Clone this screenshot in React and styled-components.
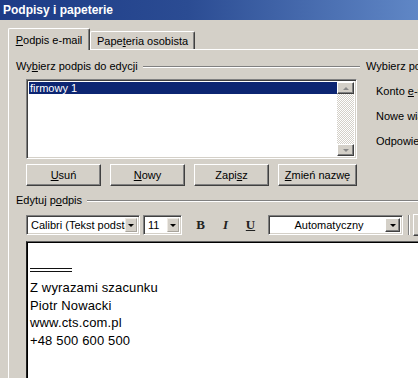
import React from "react";
import styled, { createGlobalStyle } from "styled-components";

const GlobalStyle = createGlobalStyle`
  html, body {
    margin: 0;
    padding: 0;
    overflow: hidden;
  }
  body {
    background: #d4d0c8;
    font-family: "Liberation Sans", Tahoma, Arial, sans-serif;
  }
`;

const Window = styled.div`
  width: 418px;
  height: 378px;
  overflow: hidden;
  background: #d4d0c8;
  display: flex;
  flex-direction: column;
  font-size: 11px;
  color: #000;
`;

const TitleBar = styled.div`
  flex: none;
  height: 20px;
  padding-left: 3px;
  background: linear-gradient(to right, #1d3b86, #2b4c93 45%, #6087c6);
  color: #fff;
  font-weight: bold;
  font-size: 12px;
  line-height: 20px;
  white-space: nowrap;
`;

const Body = styled.div`
  flex: 1;
  min-height: 0;
  display: flex;
  flex-direction: column;
  padding: 7px 0 0 8px;
`;

const TabRow = styled.div`
  flex: none;
  display: flex;
  align-items: flex-end;
  height: 22px;
`;

const Tab = styled.div`
  position: relative;
  z-index: ${(p) => (p.$active ? 2 : 1)};
  width: ${(p) => p.$w}px;
  height: ${(p) => (p.$active ? 22 : 18)}px;
  margin-bottom: ${(p) => (p.$active ? -1 : 0)}px;
  box-sizing: border-box;
  background: #d4d0c8;
  border-top: 1px solid #fff;
  border-left: 1px solid #fff;
  border-right: 1px solid #404040;
  border-radius: 2px 2px 0 0;
  box-shadow: inset -1px 0 #808080;
  display: flex;
  align-items: center;
  justify-content: center;
  padding-top: ${(p) => (p.$active ? 0 : 1)}px;
  white-space: nowrap;
`;

const Panel = styled.div`
  flex: 1;
  width: 470px;
  border-top: 1px solid #fff;
  border-left: 1px solid #fff;
  padding: 10px 0 0 7px;
  display: flex;
  flex-direction: column;
`;

const TopSection = styled.div`
  display: flex;
`;

const LeftCol = styled.div`
  width: 344px;
  flex: none;
  display: flex;
  flex-direction: column;
`;

const RightCol = styled.div`
  margin-left: 6px;
  display: flex;
  flex-direction: column;
  white-space: nowrap;
`;

const GroupHeader = styled.div`
  display: flex;
  align-items: center;
  height: 13px;
  line-height: 13px;
  white-space: nowrap;
`;

const Etched = styled.div`
  flex: 1;
  margin-left: 5px;
  height: 0;
  border-top: 1px solid #808080;
  border-bottom: 1px solid #fff;
`;

const OptionLabel = styled.div`
  margin-left: 10px;
  height: 13px;
  line-height: 13px;
  margin-top: ${(p) => p.$top}px;
`;

const ListBox = styled.div`
  margin: 6px 0 0 10px;
  width: 331px;
  height: 80px;
  box-sizing: border-box;
  border: 1px solid;
  border-color: #808080 #fff #fff #808080;
  box-shadow: inset 1px 1px #404040, inset -1px -1px #d4d0c8;
  background: #fff;
  display: flex;
  padding: 2px;
`;

const Items = styled.div`
  flex: 1;
`;

const Item = styled.div`
  height: 12px;
  line-height: 12px;
  padding-left: 1px;
  background: ${(p) => (p.$selected ? "#0c2572" : "transparent")};
  color: ${(p) => (p.$selected ? "#fff" : "#000")};
`;

const ScrollBar = styled.div`
  width: 17px;
  display: flex;
  flex-direction: column;
  justify-content: space-between;
  background: repeating-conic-gradient(#fff 0 25%, #d4d0c8 0 50%) 0 0 / 2px 2px;
`;

const ScrollButton = styled.div`
  height: 12px;
  box-sizing: border-box;
  background: #d4d0c8;
  border: 1px solid;
  border-color: #fff #404040 #404040 #fff;
  box-shadow: inset -1px -1px #808080;
  display: flex;
  align-items: center;
  justify-content: center;
`;

const Arrow = styled.div`
  width: 0;
  height: 0;
  border-left: 3px solid transparent;
  border-right: 3px solid transparent;
  ${(p) =>
    p.$up
      ? `border-bottom: 3px solid ${p.$color};`
      : `border-top: 3px solid ${p.$color};`}
`;

const ButtonRow = styled.div`
  display: flex;
  gap: 9px;
  margin: 5px 0 0 10px;
`;

const Button = styled.div`
  width: ${(p) => p.$w}px;
  height: 22px;
  box-sizing: border-box;
  background: #d4d0c8;
  border: 1px solid;
  border-color: #fff #404040 #404040 #fff;
  box-shadow: inset -1px -1px #808080;
  display: flex;
  align-items: center;
  justify-content: center;
  white-space: nowrap;
`;

const EditHeader = styled(GroupHeader)`
  margin-top: 8px;
`;

const Toolbar = styled.div`
  display: flex;
  align-items: center;
  height: 20px;
  margin: 8px 0 0 10px;
`;

const Combo = styled.div`
  width: ${(p) => p.$w}px;
  margin-right: ${(p) => p.$mr || 0}px;
  margin-left: ${(p) => p.$ml || 0}px;
  height: 20px;
  box-sizing: border-box;
  border: 1px solid;
  border-color: #808080 #fff #fff #808080;
  box-shadow: inset 1px 1px #404040, inset -1px -1px #d4d0c8;
  background: #fff;
  display: flex;
  align-items: center;
  padding: 2px;
`;

const ComboText = styled.div`
  flex: 1;
  min-width: 0;
  overflow: hidden;
  white-space: nowrap;
  padding-left: 2px;
  text-align: ${(p) => (p.$center ? "center" : "left")};
`;

const DropButton = styled.div`
  width: ${(p) => (p.$raised ? 15 : 12)}px;
  flex: none;
  align-self: stretch;
  box-sizing: border-box;
  background: #d4d0c8;
  ${(p) =>
    p.$raised
      ? `border: 1px solid; border-color: #fff #404040 #404040 #fff; box-shadow: inset -1px -1px #808080;`
      : `border: 1px solid; border-color: #eeeae4 #a8a49c #a8a49c #eeeae4;`}
  display: flex;
  align-items: center;
  justify-content: center;
`;

const FormatButton = styled.div`
  width: 25px;
  height: 20px;
  display: flex;
  align-items: center;
  justify-content: center;
  font-family: "Liberation Serif", "Times New Roman", serif;
  font-weight: bold;
  font-size: 13px;
  font-style: ${(p) => (p.$italic ? "italic" : "normal")};
  text-decoration: ${(p) => (p.$underline ? "underline" : "none")};
  color: #222;
`;

const Separator = styled.div`
  width: 0;
  height: 20px;
  margin: 0 3px 0 5px;
  border-left: 1px solid #808080;
  border-right: 1px solid #fff;
`;

const Editor = styled.div`
  flex: 1;
  margin: 6px 0 0 10px;
  background: #fff;
  border-top: 1px solid #606060;
  border-left: 1px solid #202020;
  box-shadow: inset 1px 1px #000;
  padding: 26px 0 0 3px;
  font-family: "Liberation Sans", Calibri, Arial, sans-serif;
  font-size: 13px;
  letter-spacing: 0.15px;
  line-height: 17.5px;
  color: #000;
`;

const DoubleRule = styled.div`
  width: 42px;
  height: 2px;
  border-top: 1px solid #111;
  border-bottom: 1px solid #111;
  margin-bottom: 7px;
`;

const U = styled.span`
  text-decoration: underline;
`;

export default function App() {
  return (
    <>
      <GlobalStyle />
      <Window>
        <TitleBar>Podpisy i papeterie</TitleBar>
        <Body>
          <TabRow>
            <Tab $active $w={82}>
              <span>
                <U>P</U>odpis e-mail
              </span>
            </Tab>
            <Tab $w={105}>
              <span>
                Pape<U>t</U>eria osobista
              </span>
            </Tab>
          </TabRow>
          <Panel>
            <TopSection>
              <LeftCol>
                <GroupHeader>
                  <span>
                    Wy<U>b</U>ierz podpis do edycji
                  </span>
                  <Etched />
                </GroupHeader>
                <ListBox>
                  <Items>
                    <Item $selected>firmowy 1</Item>
                  </Items>
                  <ScrollBar>
                    <ScrollButton>
                      <Arrow $up $color="#8a8a8a" />
                    </ScrollButton>
                    <ScrollButton>
                      <Arrow $color="#8a8a8a" />
                    </ScrollButton>
                  </ScrollBar>
                </ListBox>
                <ButtonRow>
                  <Button $w={75}>
                    <span>
                      <U>U</U>suń
                    </span>
                  </Button>
                  <Button $w={75}>
                    <span>
                      <U>N</U>owy
                    </span>
                  </Button>
                  <Button $w={75}>
                    <span>
                      Zapi<U>s</U>z
                    </span>
                  </Button>
                  <Button $w={79}>
                    <span>
                      <U>Z</U>mień nazwę
                    </span>
                  </Button>
                </ButtonRow>
              </LeftCol>
              <RightCol>
                <GroupHeader>Wybierz podpis domyślny</GroupHeader>
                <OptionLabel $top={12}>
                  Konto <U>e</U>-mail:
                </OptionLabel>
                <OptionLabel $top={12}>Nowe wiadomości:</OptionLabel>
                <OptionLabel $top={12}>Odpowiedzi/przesłane dalej:</OptionLabel>
              </RightCol>
            </TopSection>
            <EditHeader>
              <span>
                Edytuj p<U>o</U>dpis
              </span>
              <Etched />
            </EditHeader>
            <Toolbar>
              <Combo $w={114} $mr={3}>
                <ComboText>Calibri (Tekst podsta</ComboText>
                <DropButton>
                  <Arrow $color="#000" />
                </DropButton>
              </Combo>
              <Combo $w={39} $mr={6}>
                <ComboText>11</ComboText>
                <DropButton>
                  <Arrow $color="#000" />
                </DropButton>
              </Combo>
              <FormatButton>B</FormatButton>
              <FormatButton $italic>I</FormatButton>
              <FormatButton $underline>U</FormatButton>
              <Combo $w={135} $ml={5}>
                <ComboText $center>Automatyczny</ComboText>
                <DropButton $raised>
                  <Arrow $color="#000" />
                </DropButton>
              </Combo>
              <Separator />
              <Button $w={24} />
            </Toolbar>
            <Editor>
              <DoubleRule />
              <div>Z wyrazami szacunku</div>
              <div>Piotr Nowacki</div>
              <div>www.cts.com.pl</div>
              <div>+48 500 600 500</div>
            </Editor>
          </Panel>
        </Body>
      </Window>
    </>
  );
}
